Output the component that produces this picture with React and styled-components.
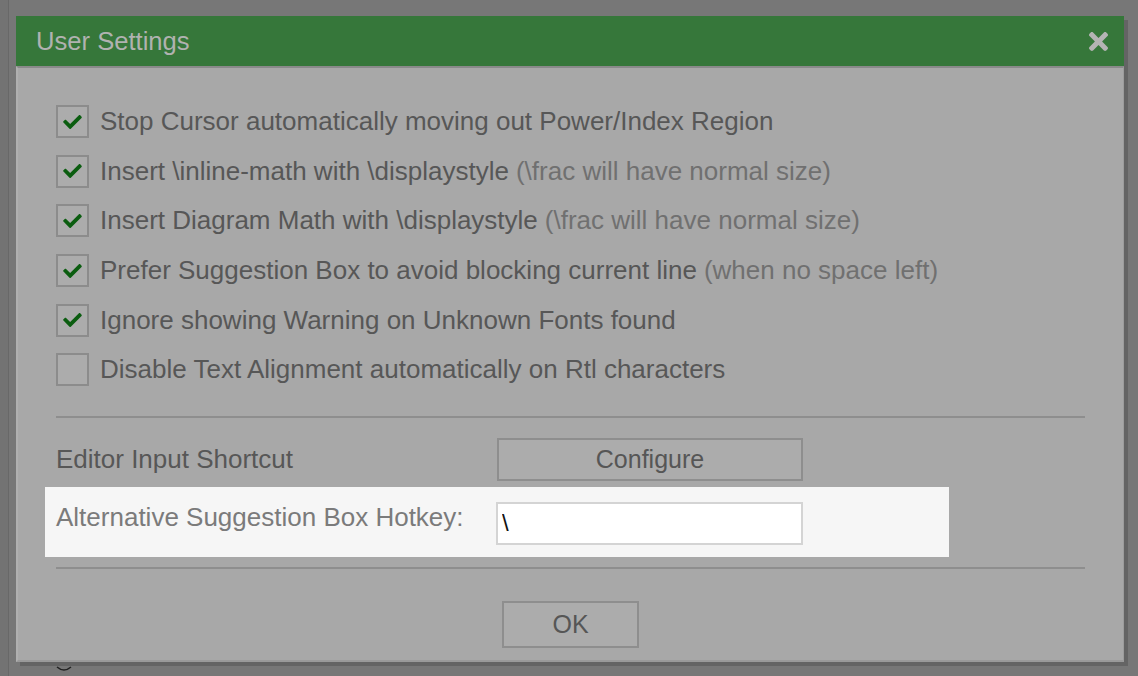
import React, { useState } from "react";
import styled, { createGlobalStyle } from "styled-components";

const GlobalStyle = createGlobalStyle`
	html, body {
		margin: 0;
		padding: 0;
		background: #737373;
	}
	body {
		font-family: "Liberation Sans", Arial, Helvetica, sans-serif;
	}
`;

const options = [
	{ id: "stopCursor", label: "Stop Cursor automatically moving out Power/Index Region", checked: true },
	{ id: "inlineMath", label: "Insert \\inline-math with \\displaystyle", note: "(\\frac will have normal size)", checked: true },
	{ id: "diagramMath", label: "Insert Diagram Math with \\displaystyle", note: "(\\frac will have normal size)", checked: true },
	{ id: "suggestBox", label: "Prefer Suggestion Box to avoid blocking current line", note: "(when no space left)", checked: true },
	{ id: "fontWarning", label: "Ignore showing Warning on Unknown Fonts found", checked: true },
	{ id: "rtlAlign", label: "Disable Text Alignment automatically on Rtl characters", checked: false },
];

const Page = styled.div`
	width: 1138px;
	height: 676px;
	overflow: hidden;
	background: #737373;
`;

const Backdrop = styled.div`
	margin-left: 8px;
	height: 100%;
	background: #777777;
	border-left: 1px solid #686868;
	padding: 16px 0 0 7px;
	box-sizing: border-box;
`;

const Dialog = styled.div`
	width: 1108px;
	box-shadow: 4px 4px 0 #646464;
	display: flex;
	flex-direction: column;
`;

const TitleBar = styled.div`
	height: 50px;
	background: #36773a;
	display: flex;
	align-items: center;
	justify-content: space-between;
	padding: 0 16px 0 20px;
	color: #b0b2b0;
	font-size: 25.6px;
`;

const Close = styled.button`
	border: none;
	background: none;
	padding: 0;
	display: flex;
	color: #b4b4b4;
	cursor: pointer;
`;

const Body = styled.div`
	background: #a8a8a8;
	border-top: 2px solid #8a8a8a;
	border-left: 2px solid #b0b0b0;
	border-right: 1px solid #9c9c9c;
	border-bottom: 2px solid #9a9a9a;
	padding: 29px 38px 12px 38px;
	display: flex;
	flex-direction: column;
`;

const OptionList = styled.div`
	display: flex;
	flex-direction: column;
`;

const OptionRow = styled.label`
	height: 49.6px;
	display: flex;
	align-items: center;
	gap: 11px;
	font-size: 26px;
	color: #575757;
	cursor: pointer;
	white-space: nowrap;
`;

const Box = styled.span`
	width: 29px;
	height: 29px;
	border: 2px solid #8c8c8c;
	background: #acacac;
	display: flex;
	align-items: center;
	justify-content: center;
	flex-shrink: 0;
`;

const Note = styled.span`
	color: #707070;
	margin-left: 7px;
`;

const Divider = styled.hr`
	border: none;
	height: 2px;
	background: #8e8e8e;
	margin: ${(p) => p.$top}px 0 0 0;
`;

const FieldRow = styled.div`
	display: grid;
	grid-template-columns: 441px 306px;
	align-items: center;
	margin-top: ${(p) => p.$top || 0}px;
	font-size: 26px;
	color: #575757;
`;

const Spotlight = styled.div`
	margin: 6px 0 0 -11px;
	width: 904px;
	height: 70px;
	background: #f6f6f6;
	display: grid;
	grid-template-columns: 440px 307px;
	align-items: start;
	padding: 15px 0 0 11px;
	box-sizing: border-box;
	font-size: 26px;
	color: #7b7b7b;
`;

const Button = styled.button`
	height: ${(p) => p.$h || 43}px;
	width: ${(p) => p.$w || 306}px;
	border: 2px solid #8e8e8e;
	background: #acacac;
	color: #565656;
	font-family: "Liberation Sans", Arial, sans-serif;
	font-size: 25px;
	padding: 0;
	cursor: pointer;
`;

const HotkeyInput = styled.input`
	height: 43px;
	width: 307px;
	box-sizing: border-box;
	border: 2px solid #d4d4d4;
	background: #ffffff;
	font-family: "Liberation Sans", Arial, sans-serif;
	font-size: 24px;
	color: #111;
	padding: 0 4px;
	outline: none;
`;

const Footer = styled.div`
	display: flex;
	justify-content: center;
	padding: 32px 0 0 0;
`;

const Peek = styled.div`
	margin: 0 0 0 40px;
	height: 10px;
	display: flex;
	align-items: flex-end;
`;

const CheckMark = () => (
	<svg width="19" height="14" viewBox="0 64 512 384" fill="#0b5d10">
		<path d="M173.898 439.404l-166.4-166.4c-9.997-9.997-9.997-26.206 0-36.204l36.203-36.204c9.997-9.998 26.207-9.998 36.204 0L192 312.69 432.095 72.596c9.997-9.997 26.207-9.997 36.204 0l36.203 36.204c9.997 9.997 9.997 26.206 0 36.204l-294.4 294.401c-9.998 9.997-26.207 9.997-36.204-.001z" />
	</svg>
);

const CloseIcon = () => (
	<svg width="19" height="19" viewBox="0 80 352 352" fill="currentColor">
		<path d="M242.72 256l100.07-100.07c12.28-12.28 12.28-32.19 0-44.48l-22.24-22.24c-12.28-12.28-32.19-12.28-44.48 0L176 189.28 75.930 89.21c-12.28-12.28-32.19-12.280-44.48 0L9.21 111.45c-12.28 12.28-12.28 32.19 0 44.48L109.28 256 9.21 356.07c-12.28 12.28-12.28 32.19 0 44.48l22.24 22.24c12.28 12.28 32.2 12.28 44.48 0L176 322.72l100.07 100.07c12.28 12.28 32.2 12.28 44.48 0l22.24-22.24c12.28-12.28 12.28-32.19 0-44.48L242.72 256z" />
	</svg>
);

export default function App() {
	const [checked, setChecked] = useState(
		Object.fromEntries(options.map((o) => [o.id, o.checked]))
	);
	const [hotkey, setHotkey] = useState("\\");

	const toggle = (id) => setChecked({ ...checked, [id]: !checked[id] });

	return (
		<Page>
			<GlobalStyle />
			<Backdrop>
				<Dialog>
					<TitleBar>
						<span>User Settings</span>
						<Close aria-label='close'>
							<CloseIcon />
						</Close>
					</TitleBar>
					<Body>
						<OptionList>
							{options.map((o) => (
								<OptionRow key={o.id} onClick={() => toggle(o.id)}>
									<Box>{checked[o.id] && <CheckMark />}</Box>
									<span>
										{o.label}
										{o.note && <Note>{o.note}</Note>}
									</span>
								</OptionRow>
							))}
						</OptionList>
						<Divider $top={21} />
						<FieldRow $top={20}>
							<span>Editor Input Shortcut</span>
							<Button>Configure</Button>
						</FieldRow>
						<Spotlight>
							<span>Alternative Suggestion Box Hotkey:</span>
							<HotkeyInput
								value={hotkey}
								onChange={(e) => setHotkey(e.target.value)}
							/>
						</Spotlight>
						<Divider $top={10} />
						<Footer>
							<Button $w={137} $h={47}>OK</Button>
						</Footer>
					</Body>
				</Dialog>
				<Peek>
					<svg width="16" height="6" viewBox="0 0 16 6">
						<path d="M1 1 Q8 7 15 1" stroke="#222" strokeWidth="1.5" fill="none" />
					</svg>
				</Peek>
			</Backdrop>
		</Page>
	);
}
